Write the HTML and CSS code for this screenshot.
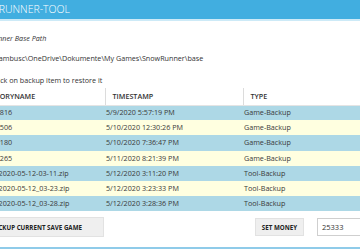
FILE: index.html
```html
<!DOCTYPE html>
<html lang="en">
<head>
  <meta charset="UTF-8" />
  <meta name="viewport" content="width=device-width, initial-scale=1" />
  <title>SnowRunner-Tool</title>
  <link rel="stylesheet" href="styles.css">
</head>
<body>

  <div class="window">
    <div class="titlebar">SNOWRUNNER-TOOL</div>

    <div class="content">
      <div class="field-label">SnowRunner Base Path</div>
      <div class="field-value">C:\Users\ambusc\OneDrive\Dokumente\My Games\SnowRunner\base</div>
      <div class="hint">Click on backup item to restore it</div>

      <table class="backups">
        <colgroup>
          <col class="col-name">
          <col class="col-time">
          <col>
        </colgroup>
        <thead>
          <tr>
            <th>DirectoryName</th>
            <th>Timestamp</th>
            <th>Type</th>
          </tr>
        </thead>
        <tbody>
          <tr><td>1589049816</td><td>5/9/2020 5:57:19 PM</td><td>Game-Backup</td></tr>
          <tr><td>1589106506</td><td>5/10/2020 12:30:26 PM</td><td>Game-Backup</td></tr>
          <tr><td>1589128180</td><td>5/10/2020 7:36:47 PM</td><td>Game-Backup</td></tr>
          <tr><td>1589210265</td><td>5/11/2020 8:21:39 PM</td><td>Game-Backup</td></tr>
          <tr><td>backup_2020-05-12-03-11.zip</td><td>5/12/2020 3:11:20 PM</td><td>Tool-Backup</td></tr>
          <tr><td>backup_2020-05-12_03-23.zip</td><td>5/12/2020 3:23:33 PM</td><td>Tool-Backup</td></tr>
          <tr><td>backup_2020-05-12_03-28.zip</td><td>5/12/2020 3:28:36 PM</td><td>Tool-Backup</td></tr>
        </tbody>
      </table>

      <div class="actions">
        <button class="btn">Backup current save game</button>
        <div class="money">
          <button class="btn btn-small">Set money</button>
          <input class="money-input" type="text" value="25333">
        </div>
      </div>
    </div>
  </div>

</body>
</html>
```

FILE: styles.css
```css
/* Base */
* {
  box-sizing: border-box;
}
body {
  margin: 0;
  background: #fff;
  overflow: hidden;
  font-family: 'Open Sans', 'Liberation Sans', sans-serif;
  font-size: 7.2px;
  line-height: 11px;
  color: #333;
}

/* window is wider than the viewport, left part is cut off */
.window {
  width: 440px;
  height: 249px;
  margin-left: -32px;
  border-bottom: 2px solid #8fcbe9;
  display: flex;
  flex-direction: column;
}

.titlebar {
  height: 21px;
  line-height: 19px;
  background: #41aee0;
  border-bottom: 2px solid #cdeaf7;
  color: #fff;
  font-size: 10.5px;
  font-weight: 300;
}

.content {
  flex: 1;
  padding: 12px 16px 0 0;
}

.field-label {
  padding-left: 5px;
  font-style: italic;
}

.field-value {
  margin-top: 9px;
}

.hint {
  margin-top: 11px;
  padding-left: 24px;
}

/* Backup list */
.backups {
  width: 100%;
  margin-top: 2px;
  table-layout: fixed;
  border-collapse: collapse;
}
.col-name {
  width: 137px;
}
.col-time {
  width: 138px;
}

.backups th {
  height: 17px;
  padding: 0 7px;
  text-align: left;
  font-weight: 600;
  text-transform: uppercase;
  color: #333;
  border-bottom: 1px solid #e4e4e4;
  border-left: 1px solid #dcdcdc;
}
.backups th:first-child {
  border-left: none;
}

.backups td {
  height: 15.2px;
  padding: 0 1px;
  white-space: nowrap;
  overflow: hidden;
  color: #3a3a3a;
}
.backups td:first-child {
  padding-left: 3px;
}
.backups tbody tr:nth-child(odd) {
  background: #add8e6;
}
.backups tbody tr:nth-child(even) {
  background: #ffffe0;
}

/* Bottom buttons */
.actions {
  display: flex;
  align-items: center;
  margin-top: 6px;
}

.btn {
  height: 20px;
  padding: 0 21px;
  background: #efefef;
  border: 1px solid #e2e2e2;
  font-family: inherit;
  font-size: 6.2px;
  font-weight: 700;
  text-transform: uppercase;
  color: #222;
}
.btn-small {
  height: 18px;
  padding: 0 6px;
}

.money {
  margin-left: auto;
  display: flex;
  align-items: center;
  gap: 13px;
}

.money-input {
  width: 75px;
  height: 18px;
  padding: 0 4px;
  border: 1px solid #cfcfcf;
  font-family: inherit;
  font-size: 7.5px;
  color: #333;
}
```
